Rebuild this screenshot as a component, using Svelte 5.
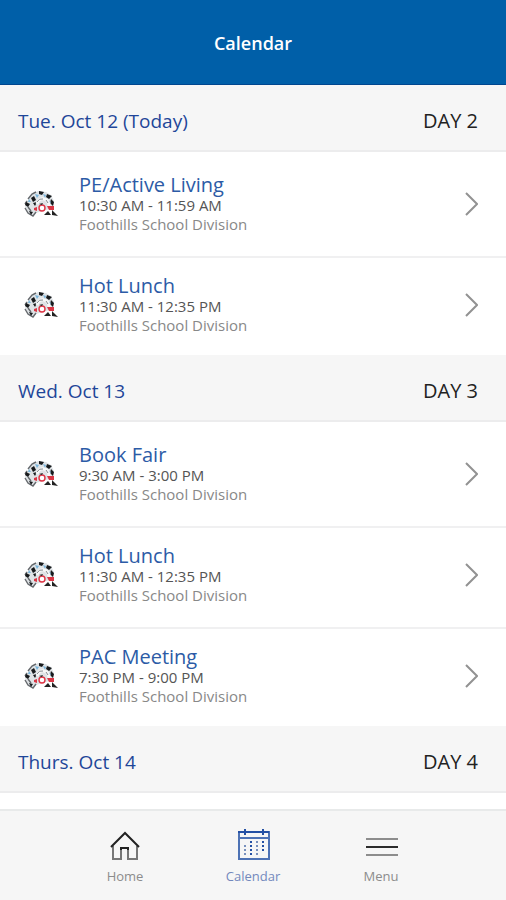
<script lang="ts">
    type CalendarEvent = {
        title: string;
        time: string;
        place: string;
    };

    type Day = {
        date: string;
        label: string;
        events: CalendarEvent[];
    };

    const place = "Foothills School Division";

    const days: Day[] = [
        {
            date: "Tue. Oct 12 (Today)",
            label: "DAY 2",
            events: [
                { title: "PE/Active Living", time: "10:30 AM - 11:59 AM", place },
                { title: "Hot Lunch", time: "11:30 AM - 12:35 PM", place },
            ],
        },
        {
            date: "Wed. Oct 13",
            label: "DAY 3",
            events: [
                { title: "Book Fair", time: "9:30 AM - 3:00 PM", place },
                { title: "Hot Lunch", time: "11:30 AM - 12:35 PM", place },
                { title: "PAC Meeting", time: "7:30 PM - 9:00 PM", place },
            ],
        },
        { date: "Thurs. Oct 14", label: "DAY 4", events: [] },
    ];

    let activeTab = "Calendar";
</script>

<div class="app">
    <header>
        <h1>Calendar</h1>
    </header>

    <main>
        {#each days as day (day.date)}
            <section>
                <div class="day">
                    <h2>{day.date}</h2>
                    <span>{day.label}</span>
                </div>
                {#if day.events.length}
                    <ul>
                        {#each day.events as event (event.title)}
                            <li>
                                <button class="event">
                                    <svg class="logo" viewBox="0 0 34 28" aria-hidden="true">
                                        <path d="M2 13 L7 5 L14 1 L22 2 L27 5 L30 11 L29 18 L22 20 L12 23 L8 26 L4 24 L1 18Z" fill="#dfe3e6" />
                                        <path d="M4 9 L8 4 L12 2 M1 14 L3 11 M1 18 L4 23 L9 26 L12 22 M4 17 L7 21" fill="none" stroke="#65696d" stroke-width="1.4" />
                                        <path d="M7 8 L10 6 L12 10 L9 12Z M15 1 L20 2 L18 5 L15 4Z M23 4 L28 6 L25 9 L22 7Z M27 9 L30 12 L29 16 L26 13Z M2 12 L6 14 L4 17 L1 15Z M9 13 L13 12 L11 16Z M5 21 L9 22 L7 25Z" fill="#171a1c" />
                                        <path d="M11 4 L15 5 L13 8Z M19 4 L22 5 L21 8Z M5 9 L7 12 L4 12Z M24 10 L27 12 L25 15Z" fill="#78b5dc" />
                                        <path d="M13 14 Q15 8 20 9 Q25 10 25 16" fill="none" stroke="#f7f8f8" stroke-width="3" />
                                        <path d="M13 12 Q15 8 19 9 M22 10 L24 13" fill="none" stroke="#858b90" />
                                        <circle cx="18" cy="18" r="3" fill="#fff" stroke="#df3445" stroke-width="1.4" />
                                        <path d="M23 16 H30 V20 H25Z M10 18 L13 17 L13 21 L10 20Z" fill="#d93645" />
                                        <path d="M15 14 L19 13 L18 15Z M20 25 L24 21 L27 25Z M28 20 L34 26 L28 25Z" fill="#222" />
                                    </svg>
                                    <span class="details">
                                        <span class="title">{event.title}</span>
                                        <span class="time">{event.time}</span>
                                        <span class="place">{event.place}</span>
                                    </span>
                                    <svg class="chevron" viewBox="0 0 14 26" aria-hidden="true">
                                        <path d="M2 2 L13 13 L2 24" />
                                    </svg>
                                </button>
                            </li>
                        {/each}
                    </ul>
                {/if}
            </section>
        {/each}
    </main>

    <nav>
        <button class:active={activeTab === "Home"} on:click={() => (activeTab = "Home")}>
            <svg viewBox="0 0 34 34" aria-hidden="true">
                <path d="M5 17 V30 H13 V19 H20 V30 H29 V17" stroke="#777" stroke-width="2" />
                <path d="M3 18 L17 4 L31 18" stroke="#222" stroke-width="2" />
                <path d="M13 21 V19 H20 V21" stroke="#222" stroke-width="2" />
            </svg>
            Home
        </button>
        <button class:active={activeTab === "Calendar"} on:click={() => (activeTab = "Calendar")}>
            <svg viewBox="0 0 34 34" aria-hidden="true">
                <path d="M3 3 H33 V30 H3Z M3 9 H33" stroke="#4d72b5" stroke-width="2" />
                <path d="M2 3 H33 M9 0 V6 M27 0 V6" stroke="#2450a4" stroke-width="2" />
                <path d="M9 16 V26 M21 12 V26" stroke="#7890bd" stroke-width="2" stroke-dasharray="2 2" />
                <path d="M15 12 V26 M27 12 V24" stroke="#2450a4" stroke-width="2" stroke-dasharray="2 2" />
            </svg>
            Calendar
        </button>
        <button class:active={activeTab === "Menu"} on:click={() => (activeTab = "Menu")}>
            <svg viewBox="0 0 34 34" aria-hidden="true">
                <path d="M2 10 H34 M2 26 H34" stroke="#8d8d8d" stroke-width="2" />
                <path d="M2 18 H34" stroke="#2c2c2c" stroke-width="2" />
            </svg>
            Menu
        </button>
    </nav>
</div>

<style>
    :global(body) {
        margin: 0;
    }

    .app {
        display: flex;
        flex-direction: column;
        min-height: 100vh;
        background-color: #fff;
        font-family: "Open Sans", "Noto Sans", sans-serif;
    }

    header {
        display: flex;
        align-items: center;
        justify-content: center;
        box-sizing: border-box;
        height: 85px;
        padding-top: 2px;
        border-bottom: 1px solid #00468f;
        background-color: #005fa8;
    }

    h1 {
        margin: 0;
        font-size: 18px;
        font-weight: 600;
        color: #fff;
    }

    .day {
        display: flex;
        align-items: center;
        justify-content: space-between;
        box-sizing: border-box;
        height: 67px;
        padding: 6px 28px 0 18px;
        border-bottom: 2px solid #ececed;
        background-color: #f6f6f6;
        font-size: 20px;
        line-height: 28px;
        color: #222;
    }

    h2 {
        margin: 0;
        font-size: 19px;
        font-weight: 500;
        color: #1f4699;
    }

    ul {
        margin: 0;
        padding: 5px 0 0;
        list-style: none;
    }

    li {
        border-bottom: 2px solid #f0f0f1;
    }

    li:last-child {
        border-bottom: none;
    }

    button {
        border: none;
        background: none;
        font-family: inherit;
        cursor: pointer;
    }

    .event {
        display: flex;
        align-items: center;
        width: 100%;
        padding: 16px 28px 22px 24px;
        text-align: left;
    }

    li:last-child .event {
        padding-bottom: 20px;
    }

    .logo {
        flex: none;
        width: 34px;
        height: 28px;
        margin-right: 21px;
    }

    .details {
        display: flex;
        flex: 1;
        flex-direction: column;
        font-size: 15px;
        line-height: 19px;
    }

    .title {
        font-size: 20px;
        line-height: 23px;
        color: #2c5ba6;
    }

    .time {
        color: #555;
    }

    .place {
        color: #888;
    }

    .chevron {
        flex: none;
        width: 14px;
        height: 26px;
        fill: none;
        stroke: #929292;
        stroke-width: 2;
    }

    nav {
        display: flex;
        justify-content: center;
        box-sizing: border-box;
        height: 91px;
        margin-top: auto;
        border-top: 2px solid #e8eaea;
        background-color: #f6f6f6;
    }

    nav button {
        display: flex;
        flex-direction: column;
        align-items: center;
        gap: 4px;
        width: 128px;
        padding: 18px 0 0;
        font-size: 13px;
        line-height: 18px;
        color: #8c8c8c;
    }

    nav button.active {
        color: #7389bd;
    }

    nav svg {
        width: 34px;
        height: 34px;
        fill: none;
    }
</style>
